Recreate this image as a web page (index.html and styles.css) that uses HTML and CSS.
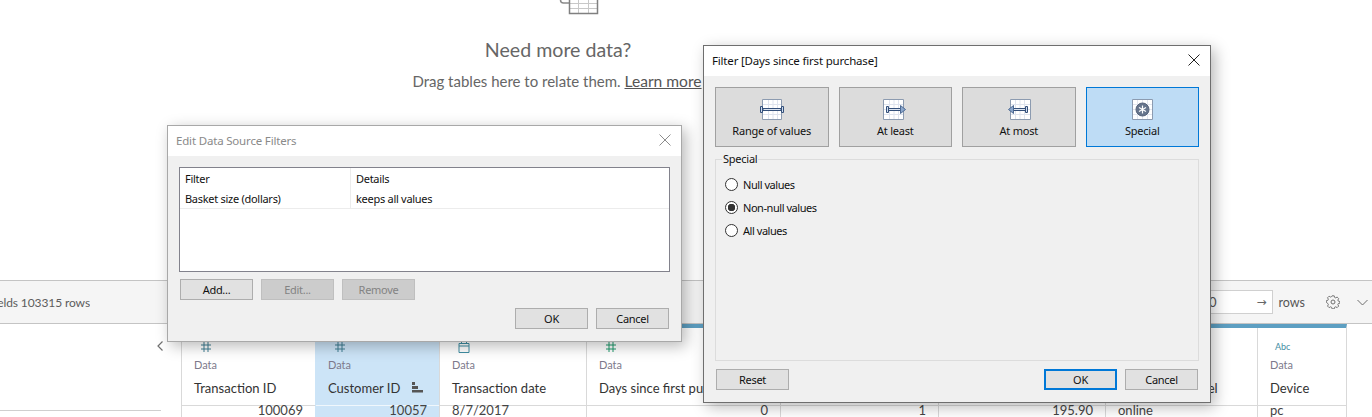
FILE: index.html
```html
<!DOCTYPE html>
<html lang="en">
<head>
<meta charset="utf-8">
<title>Data source filters</title>
<link rel="stylesheet" href="styles.css">
</head>
<body>
<div class="page">
  <section class="drop">
    <svg class="drop-icon" width="42" height="15" viewBox="0 0 42 15">
      <path d="M3.5 -3v3a3 3 0 0 0 3 3h6" fill="none" stroke="#8a8a8a" stroke-width="1.5"/>
      <path d="M12 3.5h29M12 8.500h29M21.500 0v14M31.500 0v14" stroke="#c8c8c8" fill="none"/>
      <path d="M12.500 0v13.500h28V0" fill="none" stroke="#808080" stroke-width="1.5"/>
    </svg>
    <h2 class="drop-title">Need more data?</h2>
    <p class="drop-text">Drag tables here to relate them. <a class="drop-link">Learn more</a></p>
  </section>
  <section class="toolbar">
    <div class="count">8 fields 103315 rows</div>
    <div class="tools">
      <div class="rows-box"><span class="rows-val">1,000</span><span class="rows-arrow">→</span></div>
      <span class="rows-label">rows</span>
      <svg class="gear" width="14" height="14" viewBox="0 0 14 14">
        <path d="M5.800 1h2.400l.4 1.700 1.200.5 1.500-.9 1.700 1.700-.9 1.500.5 1.200 1.700.4v1.800l-1.700.4-.5 1.200.9 1.500-1.700 1.700-1.500-.9-1.200.5-.4 1.700H5.800l-.4-1.700-1.200-.5-1.500.9-1.700-1.700.9-1.500-.5-1.200L-.3 8V6.200l1.700-.4.5-1.200-.9-1.500 1.700-1.700 1.500.9 1.200-.5z" transform="translate(.6 -.1) scale(.93)" fill="none" stroke="#6e6e6e"/>
        <circle cx="7" cy="7" r="2" fill="none" stroke="#6e6e6e"/>
      </svg>
      <svg class="chev" width="11" height="7" viewBox="0 0 11 7"><path d="M.5 1l5 5 5-5" fill="none" stroke="#6e6e6e"/></svg>
    </div>
  </section>
  <section class="main">
    <aside class="side">
      <svg class="side-chev" width="6" height="10" viewBox="0 0 6 10"><path d="M5.500.5L1 5l4.500 4.500" fill="none" stroke="#707070" stroke-width="1.2"/></svg>
      <div class="side-line"></div>
    </aside>
    <div class="table">
      <div class="col col-1">
        <div class="head">
          <svg class="type" width="12" height="12" viewBox="0 0 12 12"><path d="M4 1v10M8 1v10M1 4h10M1 8h10" stroke="#3f7f93" fill="none"/></svg>
          <div class="origin">Data</div>
          <div class="name">Transaction ID</div>
        </div>
        <div class="cell num">100069</div>
      </div>
      <div class="col col-2 selected">
        <div class="head">
          <svg class="type" width="12" height="12" viewBox="0 0 12 12"><path d="M4 1v10M8 1v10M1 4h10M1 8h10" stroke="#3f7f93" fill="none"/></svg>
          <div class="origin">Data</div>
          <div class="name">Customer ID
            <svg class="sort" width="12" height="11" viewBox="0 0 12 11"><path d="M1 0h3v3H1zM1 4h6v3H1zM1 8h11v2.500H1z" fill="#555"/></svg>
          </div>
        </div>
        <div class="cell num">10057</div>
      </div>
      <div class="col col-3">
        <div class="head">
          <svg class="type" width="12" height="12" viewBox="0 0 12 12"><path d="M1 2.500h10v9H1zM1 5h10M3.500 0v3M8.500 0v3" stroke="#3f8ea3" fill="none"/></svg>
          <div class="origin">Data</div>
          <div class="name">Transaction date</div>
        </div>
        <div class="cell">8/7/2017</div>
      </div>
      <div class="col col-4">
        <div class="head">
          <svg class="type" width="12" height="12" viewBox="0 0 12 12"><path d="M4 1v10M8 1v10M1 4h10M1 8h10" stroke="#1f9a6c" fill="none"/></svg>
          <div class="origin">Data</div>
          <div class="name">Days since first purchase</div>
        </div>
        <div class="cell num">0</div>
      </div>
      <div class="col col-5">
        <div class="head"></div>
        <div class="cell num">1</div>
      </div>
      <div class="col col-6">
        <div class="head"></div>
        <div class="cell num">195.90</div>
      </div>
      <div class="col col-7">
        <div class="head"><div class="type-gap"></div><div class="origin">Data</div><div class="name">Purchase channel</div></div>
        <div class="cell">online</div>
      </div>
      <div class="col col-8">
        <div class="head">
          <div class="abc">Abc</div>
          <div class="origin">Data</div>
          <div class="name">Device</div>
        </div>
        <div class="cell">pc</div>
      </div>
    </div>
  </section>

  <div class="dialog dialog-edit">
    <header class="title-bar">
      <span>Edit Data Source Filters</span>
      <svg class="close" width="12" height="12" viewBox="0 0 12 12"><path d="M.5.500l11 11M11.500.500l-11 11" stroke="#8c8c8c" fill="none"/></svg>
    </header>
    <div class="edit-body">
      <div class="list">
        <div class="list-row"><span class="list-a">Filter</span><span class="list-b">Details</span></div>
        <div class="list-row list-row-line"><span class="list-a">Basket size (dollars)</span><span class="list-b">keeps all values</span></div>
      </div>
      <div class="edit-actions">
        <button class="btn">Add...</button>
        <button class="btn btn-off">Edit...</button>
        <button class="btn btn-off">Remove</button>
      </div>
      <div class="footer">
        <button class="btn">OK</button>
        <button class="btn">Cancel</button>
      </div>
    </div>
  </div>

  <div class="dialog dialog-filter">
    <header class="title-bar">
      <span>Filter [Days since first purchase]</span>
      <svg class="close" width="12" height="12" viewBox="0 0 12 12"><path d="M.5.500l11 11M11.500.500l-11 11" stroke="#222" fill="none"/></svg>
    </header>
    <div class="filter-body">
      <div class="modes">
        <button class="mode">
          <svg class="mode-icon" width="24" height="21" viewBox="0 0 24 21">
            <path d="M2.500 .5h19v20h-19z" fill="#fff" stroke="#8c9bb0"/><path d="M3 5.500h18M3 10.500h18M3 15.500h18M8.500 1v19M13 1v19M17.500 1v19" stroke="#dfe4ee"/>
            <path d="M3 9.500h18v2H3z" fill="#dbe4f0" stroke="#34507a"/><path d="M.5 7.500h2v6h-2zM21.500 7.500h2v6h-2z" fill="#cfdcee" stroke="#34507a"/>
          </svg>
          <span>Range of values</span>
        </button>
        <button class="mode">
          <svg class="mode-icon" width="24" height="21" viewBox="0 0 24 21">
            <path d="M.5 .5h20v20H.5z" fill="#fff" stroke="#8c9bb0"/><path d="M1 5.500h19M1 10.500h19M1 15.500h19M6.500 1v19M11 1v19M15.500 1v19" stroke="#dfe4ee"/>
            <path d="M5 9.500h13v2H5z" fill="#dbe4f0" stroke="#34507a"/><path d="M5.500 7.500h-2v6h2z" fill="#cfdcee" stroke="#34507a"/><path d="M17.500 6.500l5 4-5 4z" fill="#8aa6cb" stroke="#4d6a94"/>
          </svg>
          <span>At least</span>
        </button>
        <button class="mode">
          <svg class="mode-icon" width="24" height="21" viewBox="0 0 24 21">
            <path d="M3.500 .5h20v20h-20z" fill="#fff" stroke="#8c9bb0"/><path d="M4 5.500h19M4 10.500h19M4 15.500h19M8.500 1v19M13 1v19M17.500 1v19" stroke="#dfe4ee"/>
            <path d="M6 9.500h13v2H6z" fill="#dbe4f0" stroke="#34507a"/><path d="M18.500 7.500h2v6h-2z" fill="#cfdcee" stroke="#34507a"/><path d="M6.500 6.500l-5 4 5 4z" fill="#8aa6cb" stroke="#4d6a94"/>
          </svg>
          <span>At most</span>
        </button>
        <button class="mode mode-on">
          <svg class="mode-icon" width="21" height="21" viewBox="0 0 21 21">
            <path d="M.5 .5h20v20H.5z" fill="#fff" stroke="#8c9bb0"/><path d="M1 5.500h19M1 10.500h19M1 15.500h19M5.500 1v19M10.500 1v19M15.500 1v19" stroke="#e3e7f0"/>
            <circle cx="10.500" cy="10.500" r="6.500" fill="#66758c" stroke="#56637a"/>
            <path d="M10.500 6.500v8M7 8.500l7 4M14 8.500l-7 4" stroke="#fff" stroke-width="1.2"/>
          </svg>
          <span>Special</span>
        </button>
      </div>
      <fieldset class="group">
        <legend class="group-label">Special</legend>
        <label class="radio-row"><span class="radio"></span>Null values</label>
        <label class="radio-row"><span class="radio radio-on"></span>Non-null values</label>
        <label class="radio-row"><span class="radio"></span>All values</label>
      </fieldset>
      <div class="filter-footer">
        <button class="btn">Reset</button>
        <div class="footer-right">
          <button class="btn btn-default">OK</button>
          <button class="btn">Cancel</button>
        </div>
      </div>
    </div>
  </div>
</div>
</body>
</html>
```

FILE: styles.css
```css
* { box-sizing: border-box; }
html, body { margin: 0; padding: 0; background: #fff; }
.page {
  position: relative;
  width: 1372px;
  height: 417px;
  overflow: hidden;
  font-family: "Lato", "Liberation Sans", sans-serif;
  color: #333;
}

/* Drop zone */
.drop {
  height: 280px;
  width: 1116px;
  display: flex;
  flex-direction: column;
  align-items: center;
}
.drop-icon { margin-left: 40px; display: block; flex: none; }
.drop-title {
  margin: 23px 0 0;
  font-size: 19.6px;
  line-height: 24px;
  font-weight: 400;
  color: #666;
}
.drop-text {
  margin: 9px 2px 0 0;
  font-size: 15px;
  line-height: 20px;
  color: #666;
}
.drop-link { font-size: 15.6px; text-decoration: underline; color: #555; }

/* Toolbar */
.toolbar {
  height: 44px;
  background: #f5f5f5;
  border-top: 1px solid #c4c4c4;
  border-bottom: 1px solid #c4c4c4;
  display: flex;
  align-items: center;
  justify-content: space-between;
}
.count {
  width: 90px;
  display: flex;
  justify-content: flex-end;
  white-space: nowrap;
  overflow: hidden;
  font-size: 12px;
  letter-spacing: -.1px;
  color: #5c5c5c;
}
.tools { display: flex; align-items: center; }
.rows-box {
  width: 94px;
  height: 24px;
  background: #fff;
  border: 1px solid #d0d0d0;
  display: flex;
  align-items: center;
  justify-content: space-between;
  padding: 0 5px 0 4px;
  font-size: 13px;
  color: #555;
}
.rows-arrow { font-size: 12px; color: #666; font-family: "DejaVu Sans", sans-serif; }
.rows-label { margin-left: 6px; font-size: 12.5px; color: #555; }
.gear { margin-left: 21px; }
.chev { margin-left: 17px; margin-right: 4px; }

/* Main grid */
.main { display: flex; height: 93px; }
.side { width: 181px; flex: none; position: relative; }
.side-chev { position: absolute; left: 157px; top: 17px; }
.side-line { position: absolute; left: 0; top: 86px; width: 161px; height: 1px; background: #cfcfcf; }
.table {
  display: flex;
  border-top: 4px solid #5d9fc2;
  border-right: 1px solid #d9d9d9;
  height: 93px;
}
.col { border-left: 1px solid #d9d9d9; flex: none; min-width: 0; }
.col-1 { width: 134px; }
.col-2 { width: 124px; }
.col-3 { width: 147px; }
.col-4 { width: 194px; }
.col-5 { width: 158px; }
.col-6 { width: 167px; }
.col-7 { width: 152px; }
.col-8 { width: 89px; }
.selected { background: #cce4f7; border-left-color: #cce4f7; }
.head {
  height: 78px;
  padding: 13px 0 0 12px;
  border-bottom: 1px solid #d9d9d9;
  white-space: nowrap;
  overflow: hidden;
}
.selected .head { border-bottom-color: #f0f7fc; }
.type { display: block; margin-left: 6px; }
.type-gap { height: 12px; }
.abc { margin-left: 5px; height: 12px; font-size: 9px; line-height: 12px; color: #3f8ea3; }
.origin { margin-top: 4px; font-size: 11px; line-height: 16px; color: #7d7a8c; }
.name { margin-top: 6px; font-size: 13px; line-height: 18px; color: #333; }
.sort { margin-left: 7px; }
.cell {
  padding: 0 12px;
  font-size: 13px;
  line-height: 8px;
  color: #444;
  white-space: nowrap;
}
.num { text-align: right; }

/* Dialogs */
.dialog {
  position: absolute;
  background: #f0f0f0;
  font-family: "Noto Sans", "Open Sans", sans-serif;
  font-size: 11px;
  color: #111;
  box-shadow: 4px 4px 14px rgba(0, 0, 0, .28);
}
.dialog-edit { left: 167px; top: 125px; width: 515px; height: 217px; border: 1px solid #a8a8a8; }
.dialog-filter { left: 703px; top: 45px; width: 508px; height: 358px; border: 1px solid #6e6e6e; }
.title-bar {
  height: 30px;
  background: #fff;
  display: flex;
  align-items: center;
  justify-content: space-between;
  padding: 0 10px 2px 8px;
  font-size: 11.5px;
  letter-spacing: -.18px;
}
.dialog-edit .title-bar { color: #8a8a8a; }
.btn {
  width: 73px;
  height: 21px;
  padding: 0;
  background: #e1e1e1;
  border: 1px solid #adadad;
  font: inherit;
  letter-spacing: -.3px;
  color: #111;
}
.btn-off { background: #cccccc; color: #838383; border-color: #bfbfbf; }
.btn-default { border: 2px solid #0078d7; }

/* Edit dialog body */
.edit-body { padding: 11px 11px 0 11px; }
.list {
  height: 105px;
  background: #fff;
  border: 1px solid #82828c;
  letter-spacing: -.28px;
}
.list-row { display: flex; height: 20px; align-items: center; }
.list-row-line { height: 21px; border-bottom: 1px solid #ececec; }
.list-a { width: 171px; padding-left: 5px; border-right: 1px solid #ececec; height: 100%; display: flex; align-items: center; }
.list-b { padding-left: 5px; }
.edit-actions { display: flex; gap: 8px; margin: 7px 0 0 1px; }
.footer { display: flex; justify-content: flex-end; gap: 8px; margin: 8px 1px 0 0; }

/* Filter dialog body */
.filter-body { padding: 11px 11px 0 11px; }
.modes { display: flex; gap: 10px; }
.mode {
  flex: 1;
  height: 60px;
  padding: 11px 0 0;
  background: #dcdcdc;
  border: 1px solid #a0a0a0;
  font: inherit;
  letter-spacing: -.2px;
  color: #111;
  display: flex;
  flex-direction: column;
  align-items: center;
}
.mode span { margin-top: 3px; line-height: 16px; }
.mode-icon { display: block; }
.mode-on { background: #bedcf5; border-color: #0078d7; }
.group {
  margin: 5px 0 0;
  padding: 0;
  height: 209px;
  width: 484px;
  border: 1px solid #dcdcdc;
  min-width: 0;
}
.group-label { margin-left: 6px; padding: 0 1px; line-height: 14px; letter-spacing: -.25px; }
.radio-row { display: flex; align-items: center; height: 23px; padding-left: 9px; letter-spacing: -.45px; }
.group-label + .radio-row { margin-top: 7px; }
.radio {
  width: 13px;
  height: 13px;
  margin-right: 5px;
  border: 1px solid #333;
  border-radius: 50%;
  background: #fff;
  flex: none;
}
.radio-on { background: radial-gradient(circle, #333 0 3.5px, #fff 4px); }
.filter-footer { display: flex; justify-content: space-between; padding: 8px 1px 0 1px; }
.footer-right { display: flex; gap: 8px; }
```
